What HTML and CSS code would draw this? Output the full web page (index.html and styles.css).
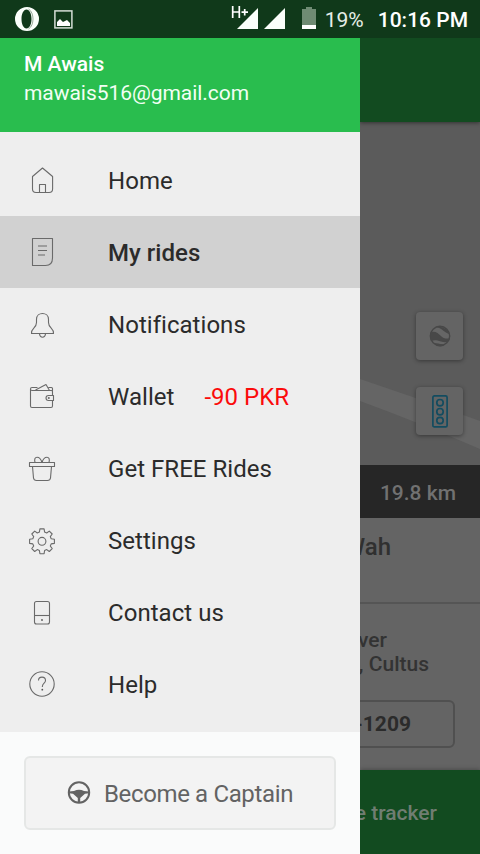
FILE: index.html
```html
<!DOCTYPE html>
<html lang="en">
<head>
<meta charset="utf-8">
<title>My rides</title>
<link rel="stylesheet" href="styles.css">
</head>
<body>
<div class="screen">
  <header class="status">
    <svg class="opera" width="24" height="24" viewBox="0 0 24 24"><path fill="#fbfffb" fill-rule="evenodd" d="M12 0a12 12 0 1 0 0 24a12 12 0 1 0 0-24zM11.500 2.500c3 0 5 4.300 5 9.500S14.500 21.500 11.500 21.500S6.500 17.200 6.500 12S8.500 2.500 11.500 2.500z"/><path d="M13.500 2c6 3.500 6 16.500 0 20" fill="none" stroke="#7d937f" stroke-width=".8"/></svg>
    <svg class="photo" width="19" height="19" viewBox="0 0 19 19"><rect x=".9" y=".9" width="17" height="17" fill="none" stroke="#d5ded6" stroke-width="1.500"/><path d="M3 16v-4l3-3 3 3 2-1 2-1 3 3v3z" fill="#fff"/></svg>
    <svg class="signal" width="55" height="26" viewBox="0 0 55 26"><path d="M6 25L27 4V25zM33 25L54 4V25z" fill="#fbfffb"/><path d="M1.700 2v12M8.300 2v12M1.700 8H8.300M10.500 8.200h6.500M13.700 5v6.500" fill="none" stroke="#10391a" stroke-width="4"/><path d="M1.700 2v12M8.300 2v12M1.700 8H8.300M10.500 8.200h6.500M13.700 5v6.500" fill="none" stroke="#fff" stroke-width="1.700"/></svg>
    <svg class="battery" width="14" height="22" viewBox="0 0 14 22"><path d="M0 2h4V0h6v2h4v16H0z" fill="#6f8b73"/><path d="M0 18h14v4H0z" fill="#fff"/></svg>
    <span class="percent">19%</span>
    <span class="clock">10:16 PM</span>
  </header>
  <div class="body">
    <aside class="drawer">
      <div class="profile">
        <div class="name">M Awais</div>
        <div class="email">mawais516@gmail.com</div>
      </div>
      <nav class="menu">
        <a class="item"><svg class="icon" viewBox="0 0 32 32"><path d="M16.500 4L26.600 12.500V25q0 3.500-3.500 3.500H10Q6.500 28.500 6.500 25V12.500zM13.500 28.500V20.500h6v8"/></svg><span>Home</span></a>
        <a class="item active"><svg class="icon" viewBox="0 0 32 32"><path d="M6.500 2.500h20V22q0 7.500-7 7.500h-13zM12 10h9M12 14.500h9M12 19h7"/></svg><span>My rides</span></a>
        <a class="item"><svg class="icon" viewBox="0 0 32 32"><path d="M5.500 25.500C5 20 10.500 20.500 10.500 14.500V11.500C10.500 3.500 22.500 3.500 22.500 11.500V14.500C22.500 20.500 28 20 27.500 25.500zM13.500 26c.5 4.300 5.500 4.300 6 0"/></svg><span>Notifications</span></a>
        <a class="item"><svg class="icon" viewBox="0 0 32 32"><path d="M26.500 15.500V11.500q0-1-1-1H6q-1.500 0-1.500-1.500T6 7.500h5.500M4.500 9v17q0 1.500 1.500 1.500H25q1.500 0 1.500-1.500V20.500M9.500 10L20 4.500 23.500 10.500M22.500 7.500h3q1 0 1 1v2.500M27.500 15.500H22.500a2.500 2.500 0 0 0 0 5h5z"/><circle cx="22.800" cy="18" r=".5"/></svg><span>Wallet</span><span class="balance">-90 PKR</span></a>
        <a class="item"><svg class="icon" viewBox="0 0 32 32"><path d="M3.500 10.500h25v4h-25zM6.500 14.500L7.500 26q.4 2.500 3 2.500H21.500q2.600 0 3-2.500L25.500 14.500M9 10.500C7 3.500 14 3.500 16 10.500C18 3.500 25 3.500 23 10.500"/></svg><span>Get FREE Rides</span></a>
        <a class="item"><svg class="icon" viewBox="0 0 32 32"><path d="M13.900 4.900h4.200l.5 3.200 2.100.9 2.600-1.900 2.900 2.900-1.900 2.600.9 2.100 3.200.5v4.200l-3.200.5-.9 2.100 1.900 2.600-2.900 2.900-2.600-1.900-2.100.9-.5 3.200h-4.200l-.5-3.200-2.100-.9-2.600 1.900-2.900-2.900 1.900-2.600-.9-2.100-3.200-.5v-4.200l3.200-.5.9-2.100-1.900-2.600 2.900-2.900 2.600 1.900 2.100-.9z"/><circle cx="16" cy="17.300" r="3.900"/></svg><span>Settings</span></a>
        <a class="item"><svg class="icon" viewBox="0 0 32 32"><rect x="8.500" y="5.500" width="15" height="22.500" rx="2"/><path d="M8.500 19.500h15"/><circle class="dot" cx="16" cy="24" r=".9"/></svg><span>Contact us</span></a>
        <a class="item"><svg class="icon" viewBox="0 0 32 32"><circle cx="16" cy="16" r="12.200"/><path d="M12.500 12.500C12.500 8 19.500 8 19.500 12.500C19.500 15.500 16.300 15 16.300 19"/><circle class="dot" cx="16.300" cy="21.700" r=".9"/></svg><span>Help</span></a>
      </nav>
      <div class="drawer-footer">
        <button class="captain"><svg width="24" height="24" viewBox="0 0 24 24"><circle cx="12" cy="11.500" r="10.200" fill="none" stroke="#636363" stroke-width="2"/><path d="M1.800 10.500L7 10Q12 7.300 17 10L22.200 10.500V12.300L18 12.700 13.200 17V21.500h-2.400V17L6 12.700 1.800 12.300z" fill="#636363"/></svg><span>Become a Captain</span></button>
      </div>
    </aside>
    <main class="page">
      <div class="appbar"></div>
      <section class="map">
        <svg class="road" width="120" height="343" viewBox="0 0 120 343"><path d="M0 257Q60 277 120 299V327Q60 301 0 279z" fill="#656565"/></svg>
        <div class="map-buttons">
          <div class="map-button"><svg width="22" height="22" viewBox="0 0 22 22"><circle cx="11" cy="11" r="9.700" fill="#666" stroke="#484848" stroke-width="1.400"/><path d="M1 8C5 5 9 8 12 11S18 14 21 13C20 17 17 18 12 16.500S5 15 2 16zM7.500 2C13 1 19 4 20.500 9C16 8 13 3.500 7.500 2zM5 18.500C9 17.500 13 20 16 19.500C13 22 8 22 5 18.500z" fill="#484848"/></svg></div>
          <div class="map-button"><svg width="16" height="33" viewBox="0 0 16 33"><g fill="none" stroke="#134c60" stroke-width="1.700"><rect x=".9" y=".9" width="14.200" height="31" rx="1.500"/><circle cx="8" cy="7.700" r="3.200"/><circle cx="8" cy="16.700" r="3.200"/><circle cx="8" cy="25.500" r="3.200"/></g></svg></div>
        </div>
      </section>
      <div class="distance">19.8 km</div>
      <div class="place">Wah</div>
      <div class="ride">
        <div class="car"><div class="driver">Silver</div><div class="model">Suzuki, Cultus</div></div>
        <div class="plate">LE-1209</div>
      </div>
      <div class="tracker">Share tracker</div>
    </main>
  </div>
</div>
</body>
</html>
```

FILE: styles.css
```css
* { box-sizing: border-box; }
body { margin: 0; font-family: Roboto, "Liberation Sans", sans-serif; }
.screen { width: 480px; height: 854px; display: flex; flex-direction: column; overflow: hidden; background: #636363; }
.status { height: 38px; flex: none; display: flex; align-items: center; padding: 0 12px 0 15px; background: #10391a; color: #fff; line-height: 38px; white-space: nowrap; }
.photo { margin-left: 15px; }
.signal { margin: -4px 0 0 auto; }
.battery { margin: -2px 0 0 16px; }
.percent { margin-left: 9px; font-size: 21px; color: #e6efe7; padding-top: 2px; }
.clock { margin-left: 14px; font-size: 21px; font-weight: 500; padding-top: 2px; }
.body { flex: 1; display: flex; min-height: 0; }
.drawer { width: 360px; flex: none; display: flex; flex-direction: column; background: #eee; }
.profile { height: 94px; padding: 12px 24px; background: #29bd4e; color: #fff; }
.name { font-size: 21px; line-height: 29px; font-weight: 500; }
.email { font-size: 21px; line-height: 29px; letter-spacing: -.05px; color: #f2fff4; }
.menu { padding-top: 12px; height: 600px; }
.item { height: 72px; display: flex; align-items: center; padding-left: 26px; font-size: 24px; line-height: 30px; letter-spacing: .04px; color: #2b2b2b; white-space: nowrap; }
.item span { padding-top: 2px; }
.item.active { background: #d1d1d1; font-weight: 500; }
.icon { width: 32px; height: 32px; flex: none; margin-right: 50px; fill: none; stroke: #6a6a6a; stroke-width: 1.100; stroke-linejoin: round; }
.dot { fill: #555; stroke: none; }
.item .balance { margin-left: 30px; letter-spacing: 0; color: #fb0b0b; }
.drawer-footer { flex: 1; padding: 24px; background: #fafbfb; }
.captain { width: 312px; height: 74px; display: flex; align-items: center; justify-content: center; gap: 13px; padding: 0; border: 2px solid #e5e7e6; border-radius: 6px; background: #f3f3f3; color: #636363; font: 24px/30px Roboto, sans-serif; letter-spacing: -.36px; }
.captain span { padding-top: 2px; }
.page { width: 120px; display: flex; flex-direction: column; overflow: hidden; background: #646464; white-space: nowrap; }
.appbar { height: 84px; flex: none; background: #124b20; box-shadow: 0 1px 4px rgba(0,0,0,.45); position: relative; z-index: 1; }
.map { height: 343px; flex: none; position: relative; background: #5b5b5b; }
.road { display: block; }
.map-buttons { position: absolute; top: 190px; right: 17px; display: flex; flex-direction: column; gap: 27px; }
.map-button { width: 47px; height: 48px; display: flex; align-items: center; justify-content: center; border-radius: 4px; background: #646464; box-shadow: 0 1px 4px rgba(0,0,0,.4); }
.distance { height: 53px; flex: none; padding-right: 24px; text-align: right; font-size: 21px; line-height: 56px; font-weight: 500; color: #717171; background: #262626; }
.place { height: 86px; flex: none; display: flex; justify-content: flex-end; padding: 14px 89px 0 0; border-bottom: 2px solid #555; font-size: 24px; line-height: 30px; font-weight: 500; color: #303030; }
.ride { height: 166px; flex: none; display: flex; flex-direction: column; align-items: flex-end; font-size: 21px; line-height: 24px; font-weight: 500; color: #333; }
.car { display: flex; flex-direction: column; align-items: flex-end; padding: 24px 51px 0 0; }
.driver { padding-right: 42px; }
.plate { width: 180px; height: 48px; margin: 24px 25px 0 0; padding-right: 42px; border: 2px solid #505050; border-radius: 6px; text-align: right; line-height: 45px; font-weight: 700; color: #2b2b2b; }
.tracker { flex: 1; display: flex; justify-content: flex-end; padding: 28px 43px 0 0; background: #124b20; box-shadow: 0 -1px 4px rgba(0,0,0,.25); font-size: 21px; line-height: 30px; font-weight: 500; color: #707d72; }
```
